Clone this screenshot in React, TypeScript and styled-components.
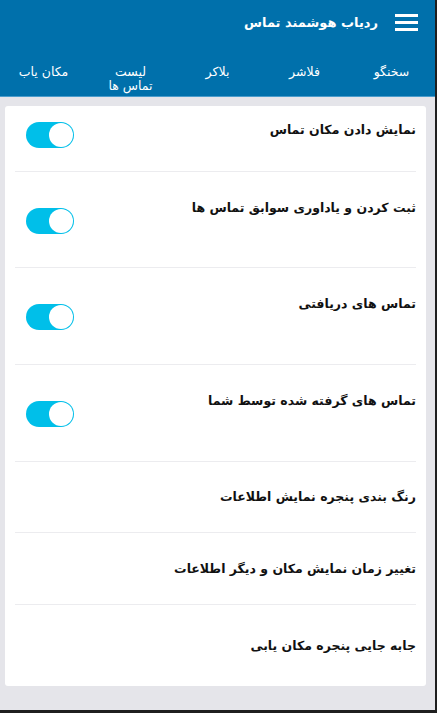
import styled, { createGlobalStyle } from "styled-components";

const GlobalStyle = createGlobalStyle`
  html, body {
    margin: 0;
    padding: 0;
    background: #1f1f1f;
  }
  * {
    box-sizing: border-box;
  }
`;

type ToggleItem = { label: string; height: number; top: number; knob: number };

const toggles: ToggleItem[] = [
  { label: "نمایش دادن مکان تماس", height: 66, top: 14, knob: 2 },
  { label: "ثبت کردن و یاداوری سوابق تماس ها", height: 96, top: 26, knob: 10 },
  { label: "تماس های دریافتی", height: 97, top: 26, knob: 10 },
  { label: "تماس های گرفته شده توسط شما", height: 97, top: 26, knob: 10 },
];

const links = [
  { label: "رنگ بندی پنجره نمایش اطلاعات", height: 71 },
  { label: "تغییر زمان نمایش مکان و دیگر اطلاعات", height: 72 },
  { label: "جابه جایی پنجره مکان یابی", height: 81 },
];

const tabs = ["سخنگو", "فلاشر", "بلاکر", "لیست\nتماس ها", "مکان یاب"];

export default function App() {
  return (
    <Screen>
      <GlobalStyle />
      <Header>
        <TitleBar>
          <Burger aria-label="menu">
            <span />
            <span />
            <span />
          </Burger>
          <Title>ردیاب هوشمند تماس</Title>
        </TitleBar>
        <Tabs>
          {tabs.map((t) => (
            <Tab key={t}>{t}</Tab>
          ))}
        </Tabs>
      </Header>
      <Body>
        <Card>
          {toggles.map((item) => (
            <ToggleRow key={item.label} $height={item.height} $top={item.top}>
              <Label>{item.label}</Label>
              <Switch $offset={item.knob}>
                <Knob />
              </Switch>
            </ToggleRow>
          ))}
          {links.map((item, i) => (
            <LinkRow key={item.label} $height={item.height} $last={i === links.length - 1}>
              <Label>{item.label}</Label>
            </LinkRow>
          ))}
        </Card>
      </Body>
    </Screen>
  );
}

const Screen = styled.div`
  width: 435px;
  height: 710px;
  background: #e5e5ea;
  display: flex;
  flex-direction: column;
  direction: rtl;
  font-family: "DejaVu Sans", "Noto Sans", sans-serif;
`;

const Header = styled.header`
  flex-shrink: 0;
  background: #0070ab;
  height: 97px;
  border-bottom: 1px solid #4a9ccc;
  display: flex;
  flex-direction: column;
`;

const TitleBar = styled.div`
  flex-shrink: 0;
  display: flex;
  align-items: center;
  height: 45px;
  padding: 0 17px 0 0;
  gap: 17px;
`;

const Burger = styled.div`
  width: 23px;
  display: flex;
  flex-direction: column;
  gap: 4px;
  span {
    display: block;
    height: 3px;
    background: #ffffff;
  }
`;

const Title = styled.h1`
  margin: 0;
  color: #ffffff;
  font-size: 13px;
  font-weight: 600;
`;

const Tabs = styled.nav`
  display: grid;
  grid-template-columns: repeat(5, 1fr);
  padding-top: 20px;
`;

const Tab = styled.div`
  color: #ffffff;
  font-size: 12.5px;
  line-height: 14px;
  text-align: center;
  white-space: pre;
`;

const Body = styled.main`
  flex: 1;
  padding: 9px 9px 24px 5px;
`;

const Card = styled.section`
  background: #ffffff;
  border-radius: 3px;
  padding: 0 10px;
`;

const ToggleRow = styled.div<{ $height: number; $top: number }>`
  height: ${(p) => p.$height}px;
  padding: ${(p) => p.$top}px 0 0 0;
  display: flex;
  justify-content: space-between;
  align-items: flex-start;
  border-bottom: 1px solid #ececef;
`;

const LinkRow = styled.div<{ $height: number; $last: boolean }>`
  height: ${(p) => p.$height}px;
  display: flex;
  align-items: center;
  border-bottom: ${(p) => (p.$last ? "none" : "1px solid #ececef")};
`;

const Label = styled.span`
  color: #111111;
  font-size: 12.5px;
  font-weight: bold;
  line-height: 20px;
`;

const Switch = styled.div<{ $offset: number }>`
  width: 48px;
  height: 26px;
  margin: ${(p) => p.$offset}px 0 0 11px;
  border-radius: 13px;
  background: #00bfe9;
  display: flex;
  justify-content: flex-start;
  align-items: center;
  padding: 1px;
`;

const Knob = styled.div`
  width: 24px;
  height: 24px;
  border-radius: 50%;
  background: #ffffff;
`;
